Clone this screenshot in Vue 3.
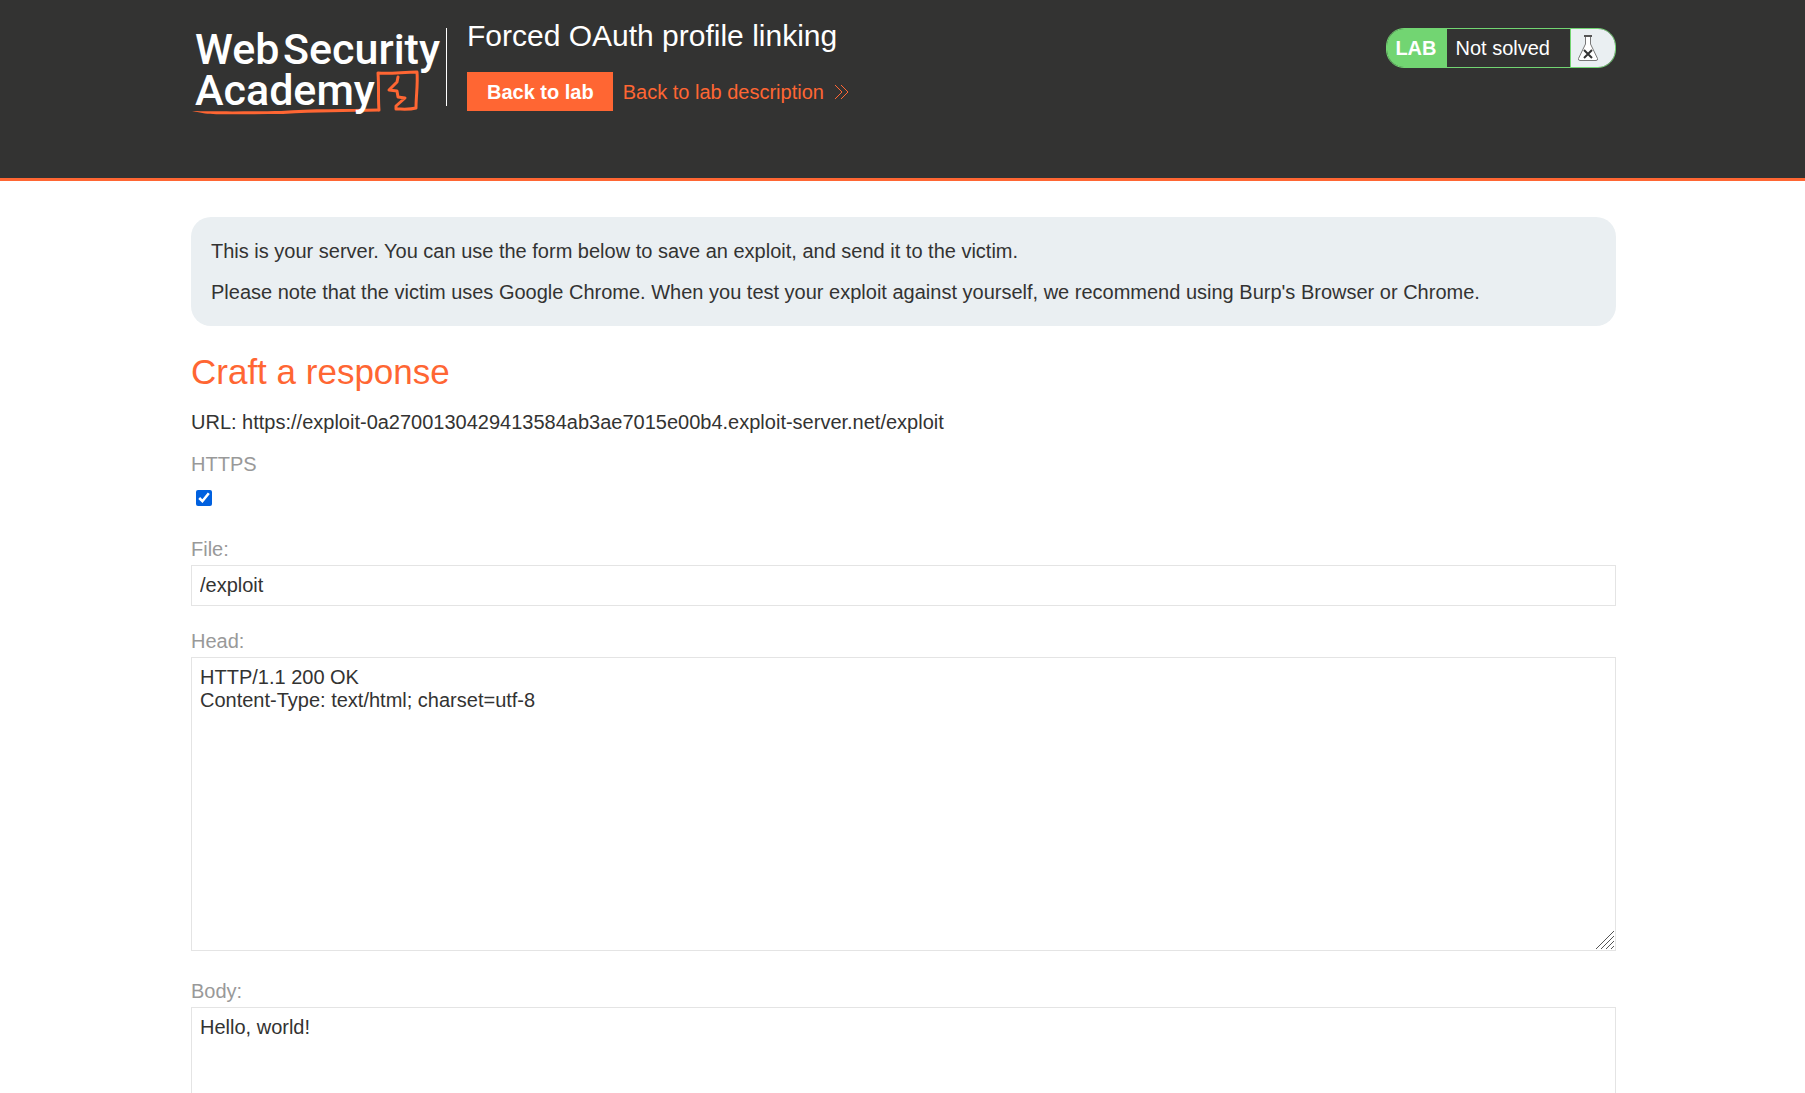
<script setup>
import { ref } from 'vue'

const https = ref(true)
const file = ref('/exploit')
const head = ref('HTTP/1.1 200 OK\nContent-Type: text/html; charset=utf-8')
const body = ref('Hello, world!')
</script>

<template>
  <header class="banner">
    <div class="wrap banner-row">
      <a class="logo" href="#" aria-label="Web Security Academy">
        <svg width="250" height="92" viewBox="0 0 250 92">
          <path class="logo-line" d="M1 83 C20 83.500 60 83.500 90 83 C120 80.500 155 81.500 188 80.500 V83.500 C155 84 125 84 92 86 C60 86 28 87 14 85.500 Z" />
          <path class="logo-mark" d="M188 82 C187 70 188 58 187 45 C200 46 212 44 226 44 C227 56 225 68 225 80 C218 82 211 81 205 81 L205 78 L214 70 L207 69 L206 63 L198 62 L206 54 L207 49" />
          <g class="logo-text">
            <text x="4" y="36">Web</text>
            <text x="92" y="36">Security</text>
            <text x="4" y="77">Academy</text>
          </g>
        </svg>
      </a>
      <div class="titles">
        <h2>Forced OAuth profile linking</h2>
        <div class="actions">
          <button type="button" class="lab-btn">Back to lab</button>
          <a class="desc-link" href="#">
            Back to lab description
            <svg width="15" height="16" viewBox="0 0 15 16">
              <path d="M1 1 L8 8 L1 15 M7 1 L14 8 L7 15" />
            </svg>
          </a>
        </div>
      </div>
      <div class="status">
        <span class="status-tag">LAB</span>
        <span class="status-text">Not solved</span>
        <span class="status-icon">
          <svg width="22" height="26" viewBox="0 0 22 26">
            <path class="flask" d="M8.500 1.500 V9 L1.500 23.500 Q1 25.500 3 25.500 H19 Q21 25.500 20.500 23.500 L13.500 9 V1.500" />
            <path class="rim" d="M7 1 H15" />
            <path class="cross" d="M7 15 L15 23 M15 15 L7 23" />
          </svg>
        </span>
      </div>
    </div>
  </header>

  <main class="wrap">
    <section class="notice">
      <p>This is your server. You can use the form below to save an exploit, and send it to the victim.</p>
      <p>Please note that the victim uses Google Chrome. When you test your exploit against yourself, we recommend using Burp's Browser or Chrome.</p>
    </section>

    <h3>Craft a response</h3>

    <form @submit.prevent>
      <p class="url">URL: https://exploit-0a2700130429413584ab3ae7015e00b4.exploit-server.net/exploit</p>

      <label for="https">HTTPS</label>
      <div class="check-row">
        <input id="https" v-model="https" type="checkbox">
      </div>

      <label for="file">File:</label>
      <input id="file" v-model="file" class="field" type="text">

      <label for="head">Head:</label>
      <div class="area">
        <textarea id="head" v-model="head" class="field" spellcheck="false"></textarea>
        <svg class="grip" width="18" height="18" viewBox="0 0 18 18">
          <path d="M0 18 L18 0 M5 18 L18 5 M10 18 L18 10 M15 18 L18 15" />
        </svg>
      </div>

      <label for="body">Body:</label>
      <div class="area">
        <textarea id="body" v-model="body" class="field" spellcheck="false"></textarea>
        <svg class="grip" width="18" height="18" viewBox="0 0 18 18">
          <path d="M0 18 L18 0 M5 18 L18 5 M10 18 L18 10 M15 18 L18 15" />
        </svg>
      </div>
    </form>
  </main>
</template>

<style>
html,
body {
  background: #fff;
  overflow-x: hidden;
}

body {
  color: #333332;
  font-family: "Liberation Sans", Arial, sans-serif;
  font-size: 20px;
  line-height: 24px;
}

html {
  scrollbar-width: none;
}
</style>

<style scoped>
* {
  box-sizing: border-box;
}

.wrap {
  max-width: 1427px;
  margin: 0 auto;
  padding-left: 2px;
}

.banner {
  height: 181px;
  background: #333332;
  border-bottom: 3px solid #ff6633;
}

.banner-row {
  display: flex;
  align-items: flex-start;
  padding-top: 28px;
}

.logo {
  width: 256px;
  height: 78px;
  border-right: 1px solid #fff;
}

.logo svg {
  display: block;
  overflow: visible;
}

.logo-text {
  fill: #fff;
  font-family: Roboto, sans-serif;
  font-size: 43px;
  font-weight: 500;
}

.logo-line {
  fill: #ff6633;
}

.logo-mark {
  fill: none;
  stroke: #ff6633;
  stroke-width: 3;
  stroke-linejoin: round;
  stroke-linecap: round;
}

.titles {
  margin: -10px 0 0 20px;
}

h2 {
  margin: 0;
  color: #fff;
  font-size: 30px;
  font-weight: 400;
  line-height: 36px;
}

.actions {
  display: flex;
  align-items: center;
  gap: 10px;
  margin-top: 18px;
}

.lab-btn {
  height: 39px;
  padding: 0 19px 0 20px;
  border: 0;
  background: #ff6633;
  color: #fff;
  font: 700 20px/24px "Liberation Sans", Arial, sans-serif;
}

.desc-link {
  display: flex;
  align-items: center;
  gap: 10px;
  color: #ff6633;
  text-decoration: none;
}

.desc-link path {
  fill: none;
  stroke: #ff6633;
  stroke-width: 1;
}

.status {
  display: flex;
  height: 40px;
  margin-left: auto;
  overflow: hidden;
  border: 1px solid #72d572;
  border-radius: 18px;
  color: #fff;
  line-height: 38px;
}

.status-tag {
  padding: 0 10px 0 8px;
  background: #72d572;
  font-weight: 700;
}

.status-text {
  padding: 0 20px 0 9px;
}

.status-icon {
  display: flex;
  align-items: center;
  width: 45px;
  padding-left: 6px;
  border-left: 1px solid #72d572;
  background: #eaeff2;
}

.flask {
  fill: #fff;
  stroke: #777;
}

.rim {
  stroke: #555;
  stroke-width: 2;
}

.cross {
  fill: none;
  stroke: #333;
  stroke-width: 2;
}

.notice {
  margin-top: 36px;
  padding: 12px 20px;
  border-radius: 20px;
  background: #eaeff2;
}

.notice p {
  margin: 10px 0 17px;
}

.notice p:last-child {
  margin-bottom: 10px;
}

h3 {
  margin: 26px 0 18px;
  color: #ff6633;
  font-size: 35px;
  font-weight: 400;
  line-height: 40px;
}

.url {
  margin: 0 0 18px;
}

label {
  display: block;
  margin-bottom: 4px;
  color: #999;
}

.check-row {
  height: 57px;
  padding: 10px 0 0 5px;
}

.check-row input {
  display: block;
  width: 16px;
  height: 16px;
  margin: 0;
  accent-color: #0060df;
}

.field {
  display: block;
  width: 100%;
  height: 41px;
  margin: 0 0 23px;
  padding: 8px;
  border: 1px solid #e4e4e4;
  border-radius: 0;
  outline: 0;
  background: #fff;
  color: #333332;
  font: 20px/23px "Liberation Sans", Arial, sans-serif;
}

.area {
  position: relative;
  margin-bottom: 28px;
}

textarea.field {
  height: 294px;
  margin: 0;
  resize: none;
}

.grip {
  position: absolute;
  right: 2px;
  bottom: 2px;
}

.grip path {
  fill: none;
  stroke: #555;
  stroke-width: 1;
}
</style>
